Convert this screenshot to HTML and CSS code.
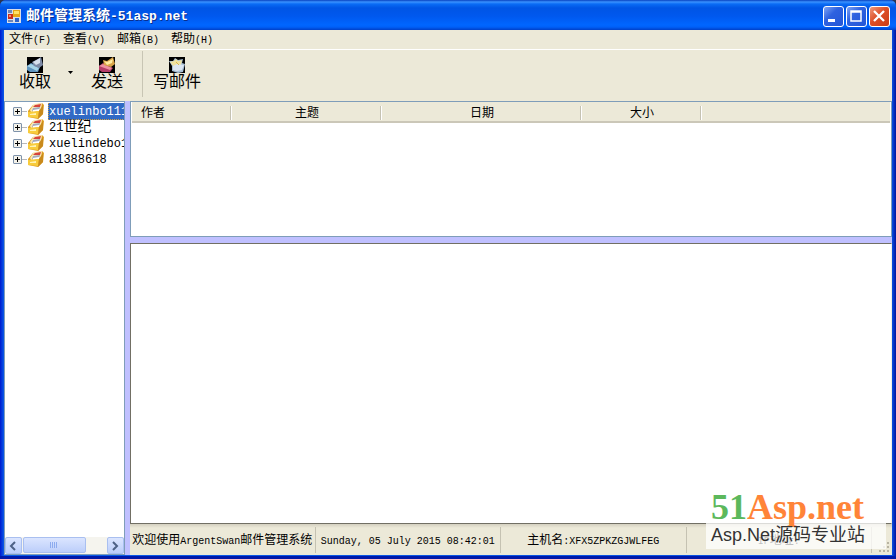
FILE: index.html
```html
<!DOCTYPE html>
<html lang="zh-CN">
<head>
<meta charset="utf-8">
<title>邮件管理系统-51asp.net</title>
<link rel="stylesheet" href="styles.css">
</head>
<body>
<svg class="defs" aria-hidden="true">
  <symbol id="mailbox" viewBox="0 0 18 16" preserveAspectRatio="none">
    <path d="M1 8 6 2 15 0 17 2 16 11 11 16 1 14Z" fill="#e0a022"/>
    <path d="M3 7 7 1 15 0 14 7 4 9Z" fill="#fbe9b4"/>
    <path d="M6 4 8 2 14 1 13 4Z" fill="#d6443c"/>
    <path d="M6 5 13 4 12 7 5 8Z" fill="#a3a9bd"/>
    <path d="M6 7 12 6 12 8 6 9Z" fill="#fff"/>
    <path d="M1 9 12 8 11 15 1 14Z" fill="#f8cc3c"/>
    <path d="M3 11 9 10 9 12 3 12Z" fill="#fff3b4"/>
    <path d="M12 8 16 2 16 11 11 16Z" fill="#c98a1c"/>
  </symbol>
</svg>
<div class="window">
  <header class="titlebar">
    <svg class="app-icon" viewBox="0 0 14 14" aria-hidden="true">
      <path d="M0 0h14v14H0z" fill="#d9dde8"/>
      <path d="M1 5h5v5H1z" fill="#c92c1c"/><path d="M2 6h2v2H2z" fill="#f08a70"/>
      <path d="M6 1h7v7H6z" fill="#e7a716"/><path d="M7 2h5v3H7z" fill="#ffe166"/>
      <path d="M8 9h4v4H8z" fill="#2d62c8"/><path d="M1 1h4v3H1zM1 11h5v2H1z" fill="#6e87b8"/>
    </svg>
    <h1>邮件管理系统<span class="latin">-51asp.net</span></h1>
    <div class="controls">
      <button class="ctl" aria-label="最小化"><svg viewBox="0 0 18 18"><path d="M4 12h7v3H4z" fill="#fff"/></svg></button>
      <button class="ctl" aria-label="最大化"><svg viewBox="0 0 18 18"><path d="M4 4h10v10H4zM4 5h10" fill="none" stroke="#fff" stroke-width="1.5"/></svg></button>
      <button class="ctl close" aria-label="关闭"><svg viewBox="0 0 18 18"><path d="M4 4l10 10M14 4 4 14" stroke="#fff" stroke-width="2.3"/></svg></button>
    </div>
  </header>
  <nav class="menubar">
    <button>文件<span class="latin">(F)</span></button>
    <button>查看<span class="latin">(V)</span></button>
    <button>邮箱<span class="latin">(B)</span></button>
    <button>帮助<span class="latin">(H)</span></button>
  </nav>
  <div class="toolbar">
    <button class="tool">
      <svg viewBox="0 0 16 16" aria-hidden="true"><path d="M0 0h16v16H0z" fill="#000"/><path d="M0 9 4 6l9 4-2 5H3L0 13Z" fill="#5d93bd"/><path d="M0 9l4-2 8 4-2 3Z" fill="#a7d4e8"/><path d="M5 5 11 2 14 0 16 8 12 11 7 9Z" fill="#7c8aa6"/><path d="M6 5 13 1 13 6 9 8Z" fill="#d6dfed"/></svg>
      收取
    </button>
    <button class="drop" aria-label="收取选项"><svg viewBox="0 0 5 3"><path d="M0 0h5L2.500 3Z" fill="#000"/></svg></button>
    <button class="tool">
      <svg viewBox="0 0 16 16" aria-hidden="true"><path d="M0 0h16v16H0z" fill="#000"/><path d="M0 9 4 6l10 5-3 4H3L0 13Z" fill="#b73c67"/><path d="M0 9l4-2 9 4-2 2Z" fill="#ee91a0"/><path d="M4 3 8 4 14 0 16 7 12 10 5 8Z" fill="#d9a347"/><path d="M5 4 8 5 14 2 13 6 8 8Z" fill="#ffeca0"/></svg>
      发送
    </button>
    <button class="tool write">
      <svg viewBox="0 0 16 16" aria-hidden="true"><path d="M0 0h16v16H0z" fill="#000"/><path d="M0 4 4 4 6 1 9 3 14 2 13 6 16 7 14 15 9 16 3 14 3 9Z" fill="#a7bfd6"/><path d="M1 5 5 4 7 2 9 4 13 3 12 8 5 10Z" fill="#efe2a0"/><path d="M4 9 8 7 15 8 13 13 8 14 4 13Z" fill="#dce6f2"/><path d="M7 5l3 3" stroke="#d9b64c"/></svg>
      写邮件
    </button>
  </div>
  <main class="body">
    <aside class="sidebar">
      <ul class="tree">
        <li><button class="expand" aria-label="展开"></button><svg class="box"><use href="#mailbox"/></svg><a class="selected" href="#a"><span class="latin">xuelinbo111</span></a></li>
        <li><button class="expand" aria-label="展开"></button><svg class="box"><use href="#mailbox"/></svg><a href="#b"><span class="latin">21</span>世纪</a></li>
        <li><button class="expand" aria-label="展开"></button><svg class="box"><use href="#mailbox"/></svg><a href="#c"><span class="latin">xuelindebo1</span></a></li>
        <li><button class="expand" aria-label="展开"></button><svg class="box"><use href="#mailbox"/></svg><a href="#d"><span class="latin">a1388618</span></a></li>
      </ul>
      <div class="scrollbar">
        <button class="arrow" aria-label="向左"><svg viewBox="0 0 14 14"><path d="M9 3 5 7l4 4" fill="none" stroke="#4d6185" stroke-width="2"/></svg></button>
        <div class="track"><div class="thumb"><svg viewBox="0 0 8 6"><path d="M.5 0v6M2.500 0v6M4.500 0v6M6.500 0v6" stroke="#8cabef"/></svg></div></div>
        <button class="arrow" aria-label="向右"><svg viewBox="0 0 14 14"><path d="M5 3l4 4-4 4" fill="none" stroke="#4d6185" stroke-width="2"/></svg></button>
      </div>
    </aside>
    <section class="content">
      <div class="list">
        <table>
          <colgroup><col class="c-author"><col class="c-subject"><col class="c-date"><col class="c-size"><col></colgroup>
          <thead><tr><th class="first">作者</th><th>主题</th><th>日期</th><th>大小</th><td></td></tr></thead>
        </table>
      </div>
      <article class="viewer"></article>
      <footer class="status">
        <div class="cell">欢迎使用<span class="latin">ArgentSwan</span>邮件管理系统</div>
        <div class="cell"><span class="latin">Sunday, 05 July 2015 08:42:01</span></div>
        <div class="cell">主机名<span class="latin">:XFX5ZPKZGJWLFEG</span></div>
        <div class="cell"><span class="latin">IP</span>地址<span class="latin">:</span></div>
        <svg class="grip" viewBox="0 0 12 12" aria-hidden="true"><path d="M9 1h2v2H9zM9 5h2v2H9zM5 5h2v2H5zM9 9h2v2H9zM5 9h2v2H5zM1 9h2v2H1z" fill="#b8b4a2"/></svg>
      </footer>
    </section>
  </main>
  <div class="watermark">
    <div class="brand"><span class="num">51</span>Asp.net</div>
    <div class="tagline">Asp.Net源码专业站</div>
  </div>
</div>
</body>
</html>
```
FILE: styles.css
```css
* { box-sizing: border-box; }

body {
  margin: 0;
  background: #2a3550;
  font: 12px/16px "Liberation Sans", "Noto Sans CJK SC", sans-serif;
  color: #000;
}

button {
  margin: 0;
  padding: 0;
  border: 0;
  background: none;
  font: inherit;
  color: inherit;
}

svg { display: block; }
.defs { position: absolute; width: 0; height: 0; }

.latin {
  font-family: "Liberation Mono", monospace;
  font-size: 10px;
}

.window {
  position: relative;
  display: flex;
  flex-direction: column;
  height: 100vh;
  padding: 0 4px 4px;
  background: linear-gradient(90deg, #0019cf, #0a5be8 4px, #0a4fe0 calc(100% - 4px), #0014a0);
  border-radius: 6px 6px 0 0;
  overflow: hidden;
  box-shadow: inset 0 -3px #0018a8;
}

.titlebar {
  display: flex;
  flex: none;
  align-items: center;
  height: 30px;
  margin: 0 -4px;
  padding: 2px 6px 0 7px;
  background: linear-gradient(#0842c0 0, #3a92ff 2px, #0a6cf5 4px, #0055e5 8px, #0058ee 16px, #0066ff 25px, #0060f8 27px, #0040c8 30px);
}

.app-icon { width: 14px; height: 14px; }

h1 {
  flex: 1;
  margin: 0 0 0 5px;
  font-size: 14px;
  line-height: 18px;
  color: #fff;
  text-shadow: 1px 1px #0a2f8c;
}

h1 .latin { font-size: 13px; }

.controls { display: flex; gap: 2px; }

.ctl {
  width: 21px;
  height: 21px;
  border: 1px solid #fff;
  border-radius: 3px;
  background: linear-gradient(135deg, #7fa4f4, #2f62e0 40%, #2456d6);
}

.ctl svg { width: 18px; height: 18px; }
.close { background: linear-gradient(135deg, #f0997c, #dd4f26 45%, #cc3c14); }

.menubar {
  display: flex;
  flex: none;
  gap: 12px;
  height: 20px;
  padding: 1px 5px 0;
  background: #ece9d8;
  border-bottom: 1px solid #fff;
}

.menubar button { white-space: nowrap; }

.toolbar {
  display: flex;
  flex: none;
  height: 51px;
  padding: 1px 8px 4px;
  background: #ece9d8;
}

.tool {
  display: flex;
  flex-direction: column;
  align-items: center;
  padding: 6px 7px 0;
  font-size: 16px;
  line-height: 18px;
}

.tool svg { width: 16px; height: 16px; }
.drop { width: 26px; padding: 0 11px 4px 10px; }
.drop svg { width: 5px; height: 3px; }

.write {
  margin-left: 12px;
  padding-left: 10px;
  border-left: 1px solid #c8c5b4;
}

.body { display: flex; flex: 1; min-height: 0; background: #c0c0ff; }

.sidebar {
  display: flex;
  flex: none;
  flex-direction: column;
  width: 121px;
  background: #fff;
  border: 1px solid #7f9db9;
  padding: 1px 0 0;
}

.tree {
  flex: 1;
  margin: 0;
  padding: 0;
  list-style: none;
  overflow: hidden;
}

.tree li {
  display: flex;
  align-items: center;
  height: 16px;
  padding-left: 8px;
  background: linear-gradient(#b8b8b8, #b8b8b8) 17px 8px / 5px 1px no-repeat;
}

.tree a {
  flex: none;
  margin-left: 3px;
  padding: 0 1px;
  font-size: 14px;
  color: #000;
  text-decoration: none;
  white-space: nowrap;
}

.tree .latin { font-size: 12px; }

.tree .selected {
  background: #316ac5;
  color: #fff;
  outline: 1px dotted #d5a040;
  outline-offset: -1px;
}

.expand {
  flex: none;
  width: 9px;
  height: 9px;
  border: 1px solid #7f93ab;
  border-radius: 1px;
  background:
    linear-gradient(#000, #000) center / 5px 1px no-repeat,
    linear-gradient(#000, #000) center / 1px 5px no-repeat,
    #f4f2ea;
}

.box { flex: none; width: 18px; height: 16px; margin-left: 5px; }

.scrollbar { display: flex; height: 17px; background: #f5f4ee; }

.arrow, .thumb {
  border: 1px solid #a9bff0;
  border-radius: 2px;
  background: linear-gradient(#dbe5ff, #bccefa);
}

.arrow { width: 17px; }
.arrow svg { width: 14px; height: 14px; }
.track { flex: 1; }

.thumb {
  display: flex;
  align-items: center;
  justify-content: center;
  width: 74%;
  height: 16px;
  margin-left: 1px;
}

.thumb svg { width: 8px; height: 6px; }

.content {
  display: flex;
  flex: 1;
  flex-direction: column;
  min-width: 0;
  margin-left: 5px;
}

.list {
  flex: none;
  height: 136px;
  padding: 0 1px;
  background: #fff;
  border: 1px solid #7f9db9;
}

table { width: 100%; border-collapse: collapse; table-layout: fixed; }
thead { background: #ece9d8; box-shadow: inset 0 -2px #cbc7b8; }

th, td {
  height: 21px;
  padding: 0;
  font-weight: normal;
  background: linear-gradient(#c5c2b2, #c5c2b2) right 1px top 4px / 1px 14px no-repeat,
    linear-gradient(#fff, #fff) right 0 top 4px / 1px 14px no-repeat;
}

td { background: none; }
.first { padding-left: 9px; text-align: left; }
.c-author { width: 100px; }
.c-subject { width: 150px; }
.c-date { width: 200px; }
.c-size { width: 120px; }

.viewer {
  flex: 1;
  margin-top: 6px;
  background: #fff;
  border: 1px solid #716f64;
  border-right-color: #f1efe2;
}

.status {
  display: flex;
  flex: none;
  height: 31px;
  padding: 3px 0 2px;
  background: linear-gradient(#d4d0c0, #ece9d8 4px);
}

.cell {
  flex: 1;
  min-width: 0;
  padding-top: 5px;
  border-right: 1px solid #c5c2b2;
  text-align: center;
  white-space: nowrap;
}

.grip { width: 12px; height: 12px; margin: 14px 2px 0 6px; }

.watermark { position: absolute; right: 10px; bottom: 10px; width: 180px; }

.brand {
  padding-left: 5px;
  font: bold 36px/32px "Liberation Serif", serif;
  color: #ff8438;
}

.num { color: #5cb85c; }

.tagline {
  padding: 0 0 2px 5px;
  font-size: 18px;
  line-height: 24px;
  color: #333;
  background: rgba(255, 255, 255, 0.75);
  white-space: nowrap;
}
```
